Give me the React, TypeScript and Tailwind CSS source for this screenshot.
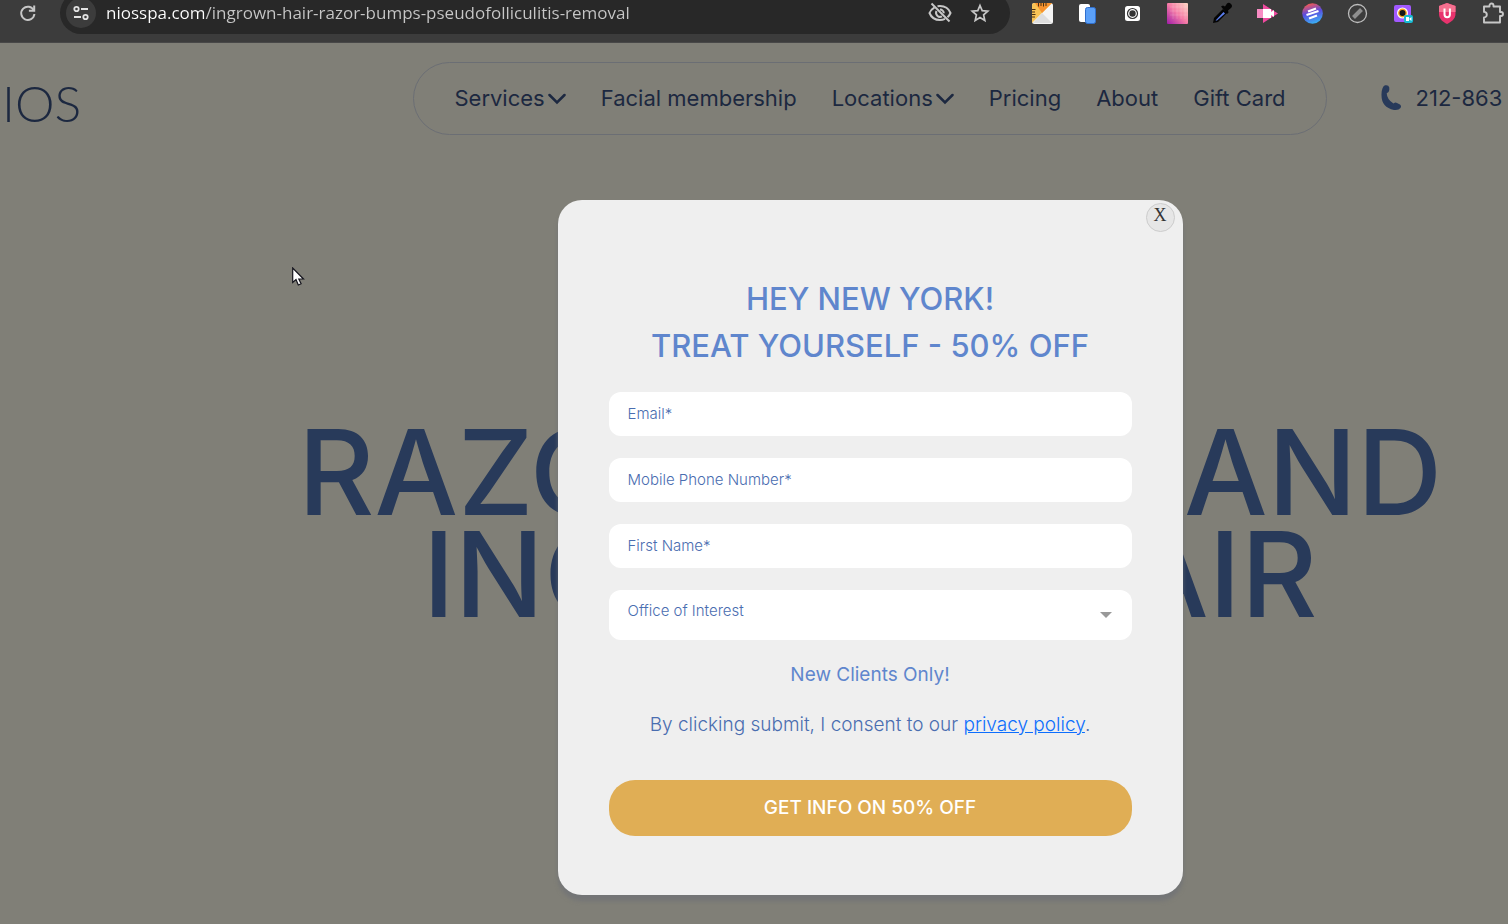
import type { ReactNode } from 'react';
import { useState } from 'react';

const NAV = [
  { label: 'Services', menu: true },
  { label: 'Facial membership' },
  { label: 'Locations', menu: true },
  { label: 'Pricing' },
  { label: 'About' },
  { label: 'Gift Card' },
];

const FIELDS = [
  { id: 'email', label: 'Email*', type: 'email' },
  { id: 'phone', label: 'Mobile Phone Number*', type: 'tel' },
  { id: 'name', label: 'First Name*', type: 'text' },
];

const EXTENSIONS: { name: string; icon: ReactNode }[] = [
  {
    name: 'Page ruler',
    icon: (
      <>
        <rect x="1" y="1" width="21" height="21" rx="2.500" fill="#f4f4f4" />
        <path d="M3 1h18L1 21V3a2 2 0 0 1 2-2z" fill="#f9c456" />
        <path d="M4 1h17L11 11z" fill="#f7932f" />
        <path d="M11 11L21 21H2z" fill="#dedede" />
        <path d="M7.500 1v3.500M10 1v3M12.500 1v3.500M15 1v3M1 7.500h3.500M1 10h3M1 12.500h3.500M1 15h3" stroke="#4a3010" />
      </>
    ),
  },
  {
    name: 'Copy',
    icon: (
      <>
        <rect x="3" y="2" width="11" height="18" rx="2" fill="#fff" />
        <rect x="9.500" y="5.500" width="10" height="16" rx="2" fill="#5ba0f8" stroke="#2f6fcf" />
      </>
    ),
  },
  {
    name: 'Screenshot',
    icon: (
      <>
        <rect x="4" y="4" width="15" height="15" rx="2.500" fill="#fff" />
        <circle cx="11.500" cy="11.500" r="5" fill="none" stroke="#333" strokeWidth="1.200" />
        <circle cx="11.500" cy="11.500" r="3.200" fill="#333" />
      </>
    ),
  },
  {
    name: 'Gradient',
    icon: (
      <>
        <defs>
          <linearGradient id="pix" x1="0" y1="1" x2="1" y2="0">
            <stop offset="0" stopColor="#a01ca8" />
            <stop offset="0.500" stopColor="#f57ba6" />
            <stop offset="1" stopColor="#ffd9c4" />
          </linearGradient>
        </defs>
        <rect x="1" y="1" width="21" height="21" rx="1" fill="url(#pix)" />
        <path d="M7 1v16M11 1v16M15 1v16M19 1v16M4 5h18M4 9h18M4 13h18" stroke="#ffffff" strokeOpacity="0.150" />
      </>
    ),
  },
  {
    name: 'Color picker',
    icon: (
      <>
        <path d="M2 21l1-5L12 7l4 4-9 9z" fill="#050505" />
        <path d="M4.500 18.500l8-8.500 1.500 1.500-8 7z" fill="#5b7ff0" />
        <path d="M10 4.500l2-1 2 1 2-3q2-1.500 4 .5t0 4l-3 2.500.5 2-1.500 1.500z" fill="#050505" />
      </>
    ),
  },
  {
    name: 'Recorder',
    icon: (
      <>
        <path d="M1 7h6V2l15 9.500L7 21v-5H1z" fill="#f04aa0" />
        <path d="M7 7h8v3l3-2v7l-3-2v3H7z" fill="#fff" />
        <path d="M1 7h6v9H1z" fill="#f78bc3" />
      </>
    ),
  },
  {
    name: 'Notes',
    icon: (
      <>
        <defs>
          <linearGradient id="orb" x1="0.350" y1="0" x2="0.650" y2="1">
            <stop offset="0" stopColor="#fb5a50" />
            <stop offset="0.450" stopColor="#5a4be0" />
            <stop offset="1" stopColor="#38b6f5" />
          </linearGradient>
        </defs>
        <circle cx="11.500" cy="11.500" r="10.300" fill="url(#orb)" />
        <path d="M7 9.500l8-3M5.500 13l12-4M8 16.500l8-3" stroke="#fff" strokeWidth="2.200" />
      </>
    ),
  },
  {
    name: 'Ruler',
    icon: (
      <>
        <circle cx="11.500" cy="11.500" r="9" fill="none" stroke="#bdbdbd" strokeWidth="1.300" />
        <path d="M7.500 15.500l8-8" stroke="#8e8e8e" strokeWidth="4" />
      </>
    ),
  },
  {
    name: 'Capture',
    icon: (
      <>
        <rect x="3" y="3" width="17" height="17" rx="2" fill="#a259ff" />
        <circle cx="11.500" cy="11" r="5.500" fill="#fff" />
        <circle cx="11.500" cy="11" r="4.400" fill="#f5a21b" />
        <circle cx="11.500" cy="11" r="3" fill="#161616" />
        <rect x="13" y="13" width="9" height="8" rx="2" fill="#17bcd4" />
        <path d="M15 15h3v4h-3zM18 17l2.500-2v4z" fill="#fff" />
      </>
    ),
  },
  {
    name: 'Shield',
    icon: (
      <>
        <path d="M11 1l8.500 3v8c0 5-4.500 8-8.500 10-4-2-8-5-8-10V4z" fill="#e8336d" />
        <path d="M11 1l8.500 3v6H3V4z" fill="#f4708f" />
        <path d="M8.500 6.500v6a2.700 2.700 0 0 0 5.400 0v-6" fill="none" stroke="#fff" strokeWidth="2" />
      </>
    ),
  },
  {
    name: 'Extensions',
    icon: (
      <path
        d="M3 4.500h5.500V3.500a2 2 0 0 1 4 0v1H19V10h1a2 2 0 0 1 0 4h-1v6.500H3v-5a2.800 2.800 0 0 0 0-5.600z"
        fill="none"
        stroke="#c7c7c7"
        strokeWidth="1.900"
        strokeLinejoin="round"
      />
    ),
  },
];

function BrowserBar() {
  return (
    <div className="flex h-[43px] shrink-0 items-start overflow-hidden border-b border-[#484848] bg-[#3c3c3c] pr-1">
      <button type="button" aria-label="Reload" className="flex h-[26px] w-[60px] shrink-0 items-center pl-[18px]">
        <svg width="20" height="20" viewBox="0 0 20 20" fill="none" stroke="#c7c7c7" strokeWidth="2">
          <path d="M15.800 7.500A6.600 6.600 0 1 0 16.400 11" />
          <path d="M16.200 2.500v5.300h-5.300" />
        </svg>
      </button>

      <div className="-mt-2 flex h-[42px] min-w-0 flex-1 items-center rounded-full bg-[#282828] pr-5 pl-[6px]">
        <button
          type="button"
          aria-label="Site information"
          className="flex size-[30px] shrink-0 items-center justify-center rounded-full bg-[#3c3c3c]"
        >
          <svg width="18" height="18" viewBox="0 0 18 18" fill="none" stroke="#e3e3e3" strokeWidth="1.800">
            <circle cx="4.500" cy="5" r="2.200" />
            <path d="M9 5h7M2 13h7" />
            <circle cx="13.500" cy="13" r="2.200" />
          </svg>
        </button>
        <input
          aria-label="Address"
          readOnly
          value="niosspa.com/ingrown-hair-razor-bumps-pseudofolliculitis-removal"
          className="ml-[10px] min-w-0 flex-1 bg-[linear-gradient(90deg,#ffffff_98px,#c7c7c7_98px)] bg-clip-text font-['Open_Sans',sans-serif] text-[17px] text-transparent outline-none"
        />
        <div className="flex gap-[18px]">
          <button type="button" aria-label="Tracking blocked">
            <svg width="24" height="22" viewBox="0 0 24 22" fill="none" stroke="#c7c7c7" strokeWidth="2">
              <path d="M6.500 5.300C4 6.800 2.300 9 1.500 11c1.700 4.200 5.800 7 10.500 7 1.800 0 3.500-.4 5-1.100M9.500 4.300A11 11 0 0 1 12 4c4.700 0 8.800 2.800 10.500 7a11.500 11.500 0 0 1-3 4.200" />
              <path d="M8.500 9a4 4 0 0 0 5.500 5.300M12 7.500a3.800 3.800 0 0 1 3.800 3.800" />
              <path d="M3.500 1.500l18 18" />
            </svg>
          </button>
          <button type="button" aria-label="Bookmark this tab">
            <svg width="20" height="20" viewBox="0 0 20 20" fill="none" stroke="#c7c7c7" strokeWidth="1.700">
              <path d="M10 2.500l2.200 5.200 5.600.5-4.200 3.700 1.200 5.500-4.800-2.900-4.800 2.900 1.200-5.500-4.200-3.700 5.600-.5z" />
            </svg>
          </button>
        </div>
      </div>

      <div className="flex shrink-0 gap-[22px] pt-[2px] pl-[21px]">
        {EXTENSIONS.map((ext) => (
          <button key={ext.name} type="button" aria-label={ext.name}>
            <svg width="23" height="23" viewBox="0 0 23 23">
              {ext.icon}
            </svg>
          </button>
        ))}
      </div>
    </div>
  );
}

function Header() {
  return (
    <header className="grid grid-cols-[232px_minmax(0,1fr)_auto_minmax(0,1fr)] items-center pt-[19px] text-[#1c2840]">
      <a href="#home" className="pt-2 pl-[2px] font-['Lato',sans-serif] text-[50px] leading-none font-light">
        IOS
      </a>
      <div />
      <nav className="flex h-[73px] items-center gap-[35px] rounded-full border border-[#6b6e74] px-10 text-[22px] whitespace-nowrap">
        {NAV.map((item) => (
          <a key={item.label} href="#nav" className="flex items-center gap-[3px]">
            {item.label}
            {item.menu && (
              <svg width="18" height="12" viewBox="0 0 18 12" fill="none" stroke="currentColor" strokeWidth="2.500">
                <path d="M1.500 2L9 9.500 16.500 2" strokeLinecap="round" />
              </svg>
            )}
          </a>
        ))}
      </nav>
      <a href="tel:212863" className="flex items-center gap-[14px] pl-[54px] text-[22px] whitespace-nowrap">
        <svg width="21" height="28" viewBox="0 0 21 28" className="shrink-0" fill="#283a5a">
          <path d="M4 .3Q7.500-.5 8.300 2.500V5q-.2 2.500-2.600 3.200Q6 14.500 12.500 18.500q1.800-1.500 3.500-.6l3 1.500q1.800 1.500 .5 3.500-2 2.700-6.500 2Q0 22.500 .5 9 .8 1.800 4 .3z" />
        </svg>
        212-863
      </a>
    </header>
  );
}

function OfferDialog({ onClose }: { onClose: () => void }) {
  return (
    <div
      role="dialog"
      aria-labelledby="offer-title"
      className="relative w-full max-w-[625px] rounded-3xl bg-[#efefef] px-[51px] pt-[75px] pb-[59px] text-center text-[#5f86cd] shadow-[0_6px_4px_rgba(110,112,118,0.7)]"
    >
      <button
        type="button"
        aria-label="Close"
        onClick={onClose}
        className="absolute top-[3px] right-2 flex size-[29px] items-center justify-center rounded-full border border-[#cccccc] bg-[#e6e6e6] pb-1 font-['Liberation_Serif',serif] text-[18px] text-[#333333]"
      >
        X
      </button>

      <h2 id="offer-title" className="text-[31px] leading-[47px] font-medium">
        HEY NEW YORK!
        <br />
        TREAT YOURSELF - 50% OFF
      </h2>

      <form className="mt-[23px]" onSubmit={(e) => e.preventDefault()}>
        <div className="flex flex-col gap-[22px]">
          {FIELDS.map((field) => (
            <input
              key={field.id}
              type={field.type}
              aria-label={field.label}
              placeholder={field.label}
              className="h-11 rounded-xl bg-white px-[19px] pb-[2px] text-[15px] font-light outline-none placeholder:text-[#4a6db0] placeholder:opacity-100"
            />
          ))}
          <div className="relative">
            <select
              aria-label="Office of Interest"
              className="h-[50px] w-full appearance-none rounded-xl bg-white px-[19px] pb-2 text-[15px] font-light text-[#4a6db0] outline-none"
            >
              <option>Office of Interest</option>
            </select>
            <svg
              width="12"
              height="6"
              viewBox="0 0 12 6"
              className="pointer-events-none absolute top-[22px] right-5"
              fill="#999999"
            >
              <path d="M0 0h12L6 6z" />
            </svg>
          </div>
        </div>

        <p className="mt-5 text-[19px] leading-[30px] font-normal">New Clients Only!</p>
        <p className="mt-5 text-[19px] leading-[30px] font-light text-[#4a6db0]">
          By clicking submit, I consent to our{' '}
          <a href="#privacy" className="text-[#0d6efd] underline">
            privacy policy
          </a>
          .
        </p>
        <button type="submit" className="mt-10 h-14 w-full rounded-[26px] bg-[#e0ae55] text-[19px] font-medium text-white">
          GET INFO ON 50% OFF
        </button>
      </form>
    </div>
  );
}

export default function App() {
  const [open, setOpen] = useState(true);

  return (
    <div className="flex h-screen flex-col overflow-hidden font-['Inter',sans-serif]">
      <BrowserBar />

      <main className="relative flex-1 bg-[#807f77]">
        <Header />

        <h1 className="mt-[286px] pl-[232px] text-center text-[118px] leading-[102px] font-medium whitespace-nowrap text-[#283a5a]">
          RAZOR BUMPS AND
          <br />
          INGROWN HAIR
        </h1>

        {open && (
          <div className="absolute inset-0 flex items-start justify-center pt-[157px] pl-[232px]">
            <OfferDialog onClose={() => setOpen(false)} />
          </div>
        )}

        {/* Pointer */}
        <svg width="13" height="20" viewBox="0 0 13 20" className="pointer-events-none absolute top-[224px] left-[292px]">
          <path
            d="M.7 1v14.500l3.300-3L6.300 18l2.800-1.200L6.800 12h4.700z"
            fill="#fff"
            stroke="#14141c"
            strokeWidth="1.200"
          />
        </svg>
      </main>
    </div>
  );
}
